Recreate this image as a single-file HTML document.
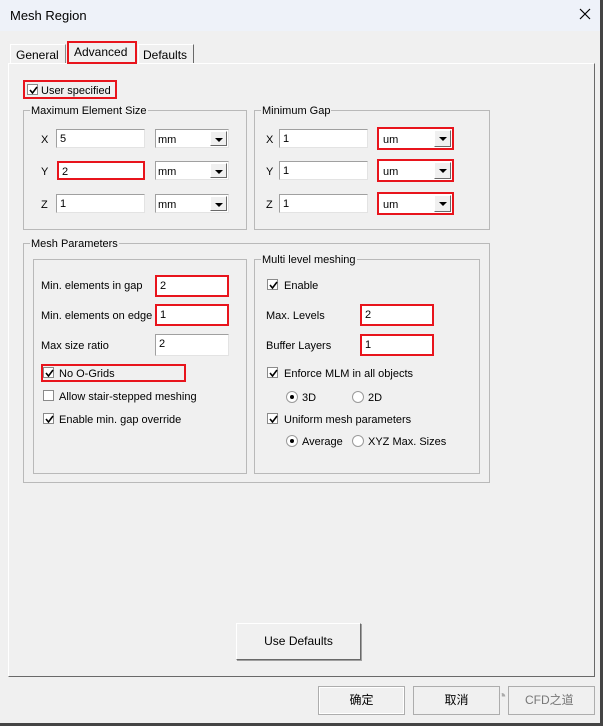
<!DOCTYPE html>
<html><head><meta charset="utf-8"><style>
*{box-sizing:border-box;margin:0;padding:0}
body{width:603px;height:726px;background:#f0f0f0;font-family:"Liberation Sans","Noto Sans CJK SC",sans-serif;font-size:11px;color:#000;position:relative;overflow:hidden}
.a{position:absolute;white-space:nowrap}
.t{margin-top:2px}
.title{left:0;top:0;width:603px;height:31px;background:#eef2f9}
.grp{position:absolute;border:1px solid #b9b9b9}
.lg{position:absolute;top:-7px;left:6px;background:#f0f0f0;padding:0 1px;line-height:14px}
.tb{position:absolute;background:#fff;border:1px solid #e3e3e3;border-top-color:#a0a0a0;border-left-color:#a0a0a0;padding:2px 3px;line-height:14px}
.red{border:2px solid #e8141c!important}
.cb{position:absolute;background:#fff;border:1px solid #e3e3e3;border-top-color:#a0a0a0;border-left-color:#a0a0a0;padding:3px 2px;line-height:14px}
.cb i{position:absolute;right:1px;top:1px;width:17px;bottom:1px;background:#f0f0f0;border:1px solid #fff;border-right-color:#696969;border-bottom-color:#696969}
.cb i:after{content:"";position:absolute;left:4px;top:6px;border-left:4px solid transparent;border-right:4px solid transparent;border-top:4px solid #000}
.chk{position:absolute;width:11px;height:11px;background:#fff;border:1px solid #8a8a8a}
.chk svg{position:absolute;left:0;top:0}
.rad{position:absolute;width:12px;height:12px;border-radius:50%;background:#fff;border:1px solid #9a9a9a}
.rad.on:after{content:"";position:absolute;left:3px;top:3px;width:4px;height:4px;border-radius:50%;background:#000}
.btn{position:absolute;background:#f0f0f0;border:1px solid #fff;border-right-color:#696969;border-bottom-color:#696969;box-shadow:1px 1px 0 #a0a0a0;text-align:center;font-size:12px}
</style></head><body>
<div class="a title"></div>
<div class="a" style="left:10px;top:8px;font-size:13px">Mesh Region</div>
<svg class="a" style="left:579px;top:8px" width="12" height="12"><path d="M1 1L11 11M11 1L1 11" stroke="#000" stroke-width="1.2"/></svg>

<div class="a" style="left:8px;top:63px;width:587px;height:614px;border:1px solid #fff;border-right-color:#696969;border-bottom-color:#696969"></div>
<div class="a" style="left:10px;top:44px;width:56px;height:19px;border:1px solid #fff;border-right-color:#888;border-bottom:none;padding:3px 0 0 5px;font-size:12px">General</div>
<div class="a red" style="left:67px;top:41px;width:70px;height:23px;padding:2px 0 0 5px;font-size:12px">Advanced</div>
<div class="a" style="left:138px;top:44px;width:56px;height:19px;border:1px solid #fff;border-right-color:#696969;border-bottom:none;padding:3px 0 0 4px;font-size:12px">Defaults</div>

<div class="a red" style="left:23px;top:80px;width:94px;height:19px"></div>
<div class="chk" style="left:27px;top:84px"><svg width="11" height="11"><path d="M2 5L4.5 8L9 2" stroke="#000" stroke-width="1.6" fill="none"/></svg></div>
<div class="a t" style="left:41px;top:83px">User specified</div>

<div class="grp" style="left:23px;top:110px;width:224px;height:120px"><span class="lg">Maximum Element Size</span></div>
<div class="a t" style="left:41px;top:132px">X</div>
<div class="tb" style="left:56px;top:129px;width:89px;height:19px">5</div>
<div class="cb" style="left:155px;top:129px;width:74px;height:19px">mm<i></i></div>
<div class="a t" style="left:41px;top:164px">Y</div>
<div class="tb red" style="left:57px;top:161px;width:88px;height:19px">2</div>
<div class="cb" style="left:155px;top:161px;width:74px;height:19px">mm<i></i></div>
<div class="a t" style="left:41px;top:197px">Z</div>
<div class="tb" style="left:56px;top:194px;width:89px;height:19px">1</div>
<div class="cb" style="left:155px;top:194px;width:74px;height:19px">mm<i></i></div>

<div class="grp" style="left:254px;top:110px;width:236px;height:120px"><span class="lg">Minimum Gap</span></div>
<div class="a t" style="left:266px;top:132px">X</div>
<div class="tb" style="left:279px;top:129px;width:89px;height:19px">1</div>
<div class="cb red" style="left:377px;top:127px;width:77px;height:23px;padding-left:4px;padding-top:4px">um<i></i></div>
<div class="a t" style="left:266px;top:164px">Y</div>
<div class="tb" style="left:279px;top:161px;width:89px;height:19px">1</div>
<div class="cb red" style="left:377px;top:159px;width:77px;height:23px;padding-left:4px;padding-top:4px">um<i></i></div>
<div class="a t" style="left:266px;top:197px">Z</div>
<div class="tb" style="left:279px;top:194px;width:89px;height:19px">1</div>
<div class="cb red" style="left:377px;top:192px;width:77px;height:23px;padding-left:4px;padding-top:4px">um<i></i></div>

<div class="grp" style="left:23px;top:243px;width:467px;height:240px"><span class="lg">Mesh Parameters</span></div>
<div class="grp" style="left:33px;top:259px;width:214px;height:215px"></div>
<div class="a t" style="left:41px;top:278px">Min. elements in gap</div>
<div class="tb red" style="left:155px;top:275px;width:74px;height:22px">2</div>
<div class="a t" style="left:41px;top:308px">Min. elements on edge</div>
<div class="tb red" style="left:155px;top:304px;width:74px;height:22px">1</div>
<div class="a t" style="left:41px;top:338px">Max size ratio</div>
<div class="tb" style="left:155px;top:334px;width:74px;height:22px">2</div>
<div class="a red" style="left:41px;top:364px;width:145px;height:18px"></div>
<div class="chk" style="left:43px;top:367px"><svg width="11" height="11"><path d="M2 5L4.5 8L9 2" stroke="#000" stroke-width="1.6" fill="none"/></svg></div>
<div class="a t" style="left:59px;top:366px">No O-Grids</div>
<div class="chk" style="left:43px;top:390px"></div>
<div class="a t" style="left:59px;top:389px">Allow stair-stepped meshing</div>
<div class="chk" style="left:43px;top:413px"><svg width="11" height="11"><path d="M2 5L4.5 8L9 2" stroke="#000" stroke-width="1.6" fill="none"/></svg></div>
<div class="a t" style="left:59px;top:412px">Enable min. gap override</div>

<div class="grp" style="left:254px;top:259px;width:226px;height:215px"><span class="lg">Multi level meshing</span></div>
<div class="chk" style="left:267px;top:279px"><svg width="11" height="11"><path d="M2 5L4.5 8L9 2" stroke="#000" stroke-width="1.6" fill="none"/></svg></div>
<div class="a t" style="left:284px;top:278px">Enable</div>
<div class="a t" style="left:266px;top:308px">Max. Levels</div>
<div class="tb red" style="left:360px;top:304px;width:74px;height:22px">2</div>
<div class="a t" style="left:266px;top:338px">Buffer Layers</div>
<div class="tb red" style="left:360px;top:334px;width:74px;height:22px">1</div>
<div class="chk" style="left:267px;top:367px"><svg width="11" height="11"><path d="M2 5L4.5 8L9 2" stroke="#000" stroke-width="1.6" fill="none"/></svg></div>
<div class="a t" style="left:284px;top:366px">Enforce MLM in all objects</div>
<div class="rad on" style="left:286px;top:391px"></div>
<div class="a t" style="left:302px;top:390px">3D</div>
<div class="rad" style="left:352px;top:391px"></div>
<div class="a t" style="left:368px;top:390px">2D</div>
<div class="chk" style="left:267px;top:413px"><svg width="11" height="11"><path d="M2 5L4.5 8L9 2" stroke="#000" stroke-width="1.6" fill="none"/></svg></div>
<div class="a t" style="left:284px;top:412px">Uniform mesh parameters</div>
<div class="rad on" style="left:286px;top:435px"></div>
<div class="a t" style="left:302px;top:434px">Average</div>
<div class="rad" style="left:352px;top:435px"></div>
<div class="a t" style="left:368px;top:434px">XYZ Max. Sizes</div>

<div class="btn" style="left:236px;top:623px;width:125px;height:37px;line-height:35px">Use Defaults</div>

<div class="btn" style="left:318px;top:686px;width:87px;height:29px;line-height:27px;border:1px solid #adadad;box-shadow:inset 0 0 0 1px #fff">确定</div>
<div class="btn" style="left:413px;top:686px;width:87px;height:29px;line-height:27px;border:1px solid #adadad;box-shadow:none">取消</div>
<div class="btn" style="left:508px;top:686px;width:87px;height:29px;line-height:27px;border:1px solid #adadad;box-shadow:none;color:#777;text-align:left;padding-left:16px">CFD之道</div>
<div class="a" style="left:497px;top:688px;font-size:16px;color:#aaa">◔</div>
<div class="a" style="left:600px;top:0;width:3px;height:726px;background:#444"></div>
<div class="a" style="left:0;top:723px;width:603px;height:3px;background:#444"></div>
</body></html>
